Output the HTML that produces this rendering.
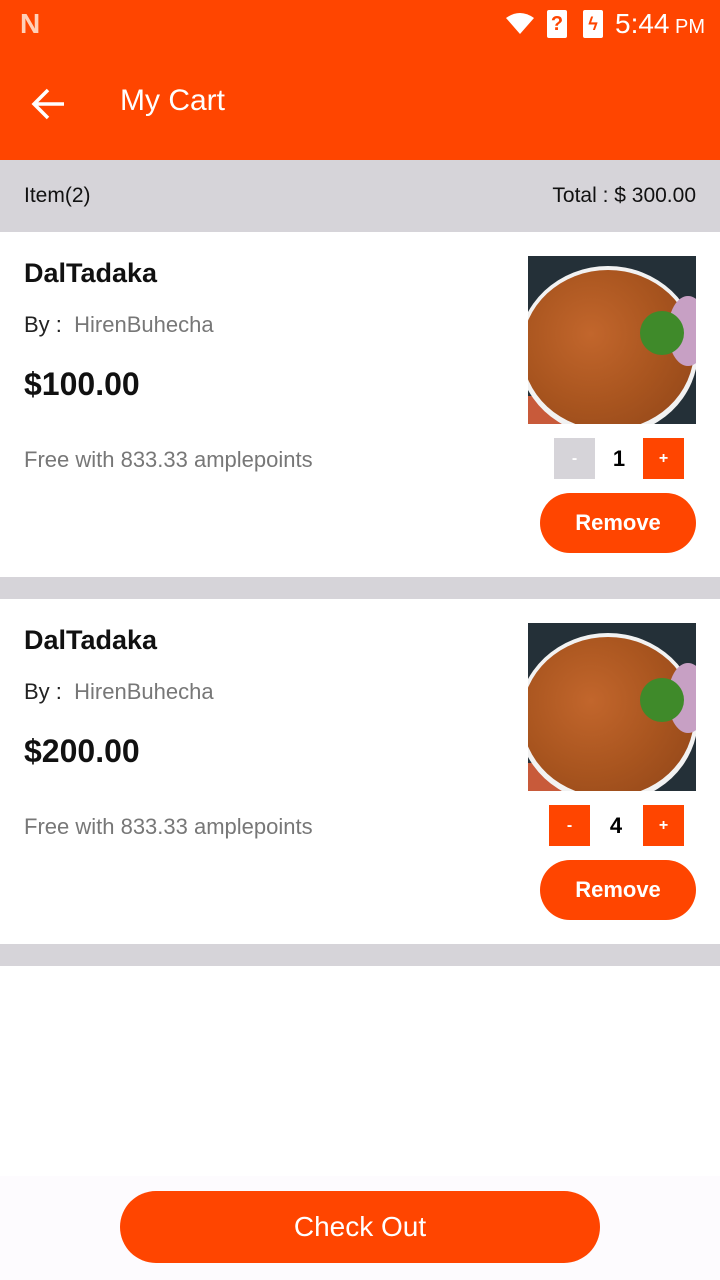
<!DOCTYPE html>
<html><head><style>
body{margin:0;width:720px;height:1280px;position:relative;background:#fff;font-family:"Liberation Sans",sans-serif;overflow:hidden}
.a{position:absolute}
.img{width:168px;height:168px;background:#243038;overflow:hidden}
.bowl{position:absolute;left:-10px;top:10px;width:180px;height:170px;border-radius:50%;background:#f2f2f2}
.dal{position:absolute;left:-6px;top:14px;width:172px;height:160px;border-radius:50%;background:radial-gradient(circle at 40% 40%,#c2662c,#a9551f 50%,#8e4418)}
.herb{position:absolute;left:112px;top:55px;width:44px;height:44px;border-radius:50%;background:#3f8a2a}
.onion{position:absolute;left:140px;top:40px;width:40px;height:70px;border-radius:50%;background:#c7a0c4}
.cloth{position:absolute;left:0;top:140px;width:40px;height:30px;background:#c85a3a}
.btn{background:#ff4500;color:#fff;text-align:center}
</style></head><body>
<div class="a" style="left:0;top:0;width:720px;height:160px;background:#ff4500"></div>
<div class="a" style="left:20px;top:8px;color:#ffd0b8;font-weight:bold;font-size:28px">N</div>
<svg class="a" style="left:505px;top:12px" width="30" height="24"><path d="M1 6 Q15 -4 29 6 L15 22Z" fill="#fff"/></svg>
<div class="a" style="left:547px;top:10px;width:20px;height:28px;background:#fff;border-radius:2px;color:#ff4500;font-weight:bold;font-size:20px;text-align:center;line-height:28px">?</div>
<div class="a" style="left:583px;top:10px;width:20px;height:28px;background:#fff;border-radius:2px;color:#ff4500;font-weight:bold;font-size:18px;text-align:center;line-height:28px">ϟ</div>
<div class="a" style="left:615px;top:8px;color:#fff;font-size:28px">5:44<span style="font-size:20px"> PM</span></div>
<svg class="a" style="left:30px;top:88px" width="36" height="32"><path d="M34 16H4M18 2L4 16l14 14" stroke="#fff" stroke-width="3.5" fill="none"/></svg>
<div class="a" style="left:120px;top:84px;color:#fff;font-size:30px">My Cart</div>
<div class="a" style="left:0;top:160px;width:720px;height:72px;background:#d6d4d9"></div>
<div class="a" style="left:24px;top:184px;font-size:21px;color:#111">Item(2)</div>
<div class="a" style="right:24px;top:184px;font-size:21px;color:#111">Total : $ 300.00</div>

<div class="a" style="left:0;top:577px;width:720px;height:22px;background:#d6d4d9"></div>
<div class="a" style="left:0;top:944px;width:720px;height:22px;background:#d6d4d9"></div>

<!-- card 1 -->
<div class="a" style="left:24px;top:258px;font-size:27px;font-weight:bold;color:#111">DalTadaka</div>
<div class="a" style="left:24px;top:312px;font-size:22px;color:#222">By : &nbsp;<span style="color:#777">HirenBuhecha</span></div>
<div class="a" style="left:24px;top:366px;font-size:32px;font-weight:bold;color:#111">$100.00</div>
<div class="a" style="left:24px;top:447px;font-size:22px;color:#777">Free with 833.33 amplepoints</div>
<div class="a img" style="left:528px;top:256px"><div class="cloth"></div><div class="bowl"></div><div class="dal"></div><div class="onion"></div><div class="herb"></div></div>
<div class="a" style="left:554px;top:438px;width:41px;height:41px;background:#d6d4d9;color:#fff;text-align:center;line-height:41px;font-weight:bold">-</div>
<div class="a" style="left:595px;top:438px;width:48px;height:41px;text-align:center;line-height:41px;font-size:22px;font-weight:bold">1</div>
<div class="a btn" style="left:643px;top:438px;width:41px;height:41px;line-height:41px;font-weight:bold">+</div>
<div class="a btn" style="left:540px;top:493px;width:156px;height:60px;border-radius:30px;line-height:60px;font-size:22px;font-weight:bold">Remove</div>

<!-- card 2 -->
<div class="a" style="left:24px;top:625px;font-size:27px;font-weight:bold;color:#111">DalTadaka</div>
<div class="a" style="left:24px;top:679px;font-size:22px;color:#222">By : &nbsp;<span style="color:#777">HirenBuhecha</span></div>
<div class="a" style="left:24px;top:733px;font-size:32px;font-weight:bold;color:#111">$200.00</div>
<div class="a" style="left:24px;top:814px;font-size:22px;color:#777">Free with 833.33 amplepoints</div>
<div class="a img" style="left:528px;top:623px"><div class="cloth"></div><div class="bowl"></div><div class="dal"></div><div class="onion"></div><div class="herb"></div></div>
<div class="a btn" style="left:549px;top:805px;width:41px;height:41px;line-height:41px;font-weight:bold">-</div>
<div class="a" style="left:592px;top:805px;width:48px;height:41px;text-align:center;line-height:41px;font-size:22px;font-weight:bold">4</div>
<div class="a btn" style="left:643px;top:805px;width:41px;height:41px;line-height:41px;font-weight:bold">+</div>
<div class="a btn" style="left:540px;top:860px;width:156px;height:60px;border-radius:30px;line-height:60px;font-size:22px;font-weight:bold">Remove</div>

<div class="a" style="left:0;top:1176px;width:720px;height:104px;background:#fdfbfe"></div>
<div class="a btn" style="left:120px;top:1191px;width:480px;height:72px;border-radius:36px;line-height:72px;font-size:28px">Check Out</div>
</body></html>
